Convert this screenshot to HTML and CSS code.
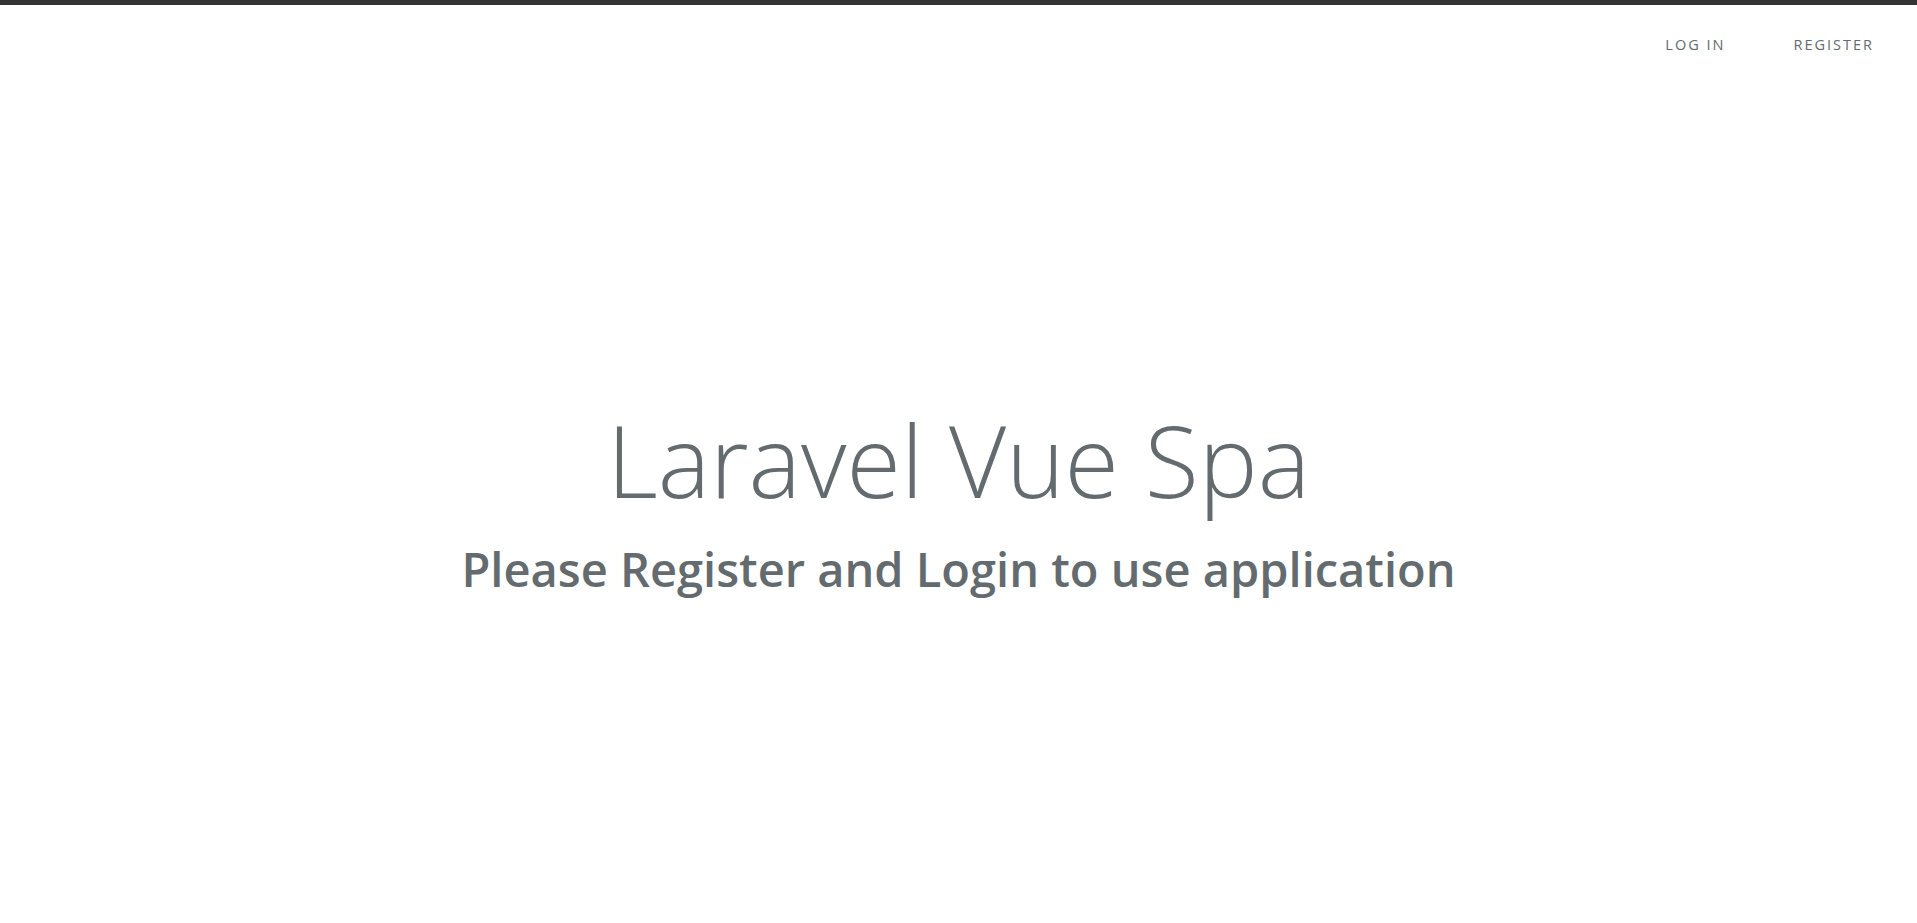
FILE: index.html
```html
<!DOCTYPE html>
<html lang="en">
<head>
<meta charset="utf-8">
<title>Laravel Vue Spa</title>
<link rel="stylesheet" href="styles.css">
</head>
<body>
<div class="page">
  <nav class="links">
    <a href="#">Log in</a>
    <a href="#">Register</a>
  </nav>
  <main class="content">
    <div class="title">Laravel Vue Spa</div>
    <h1 class="subtitle">Please Register and Login to use application</h1>
  </main>
</div>
</body>
</html>
```
FILE: styles.css
```css
html, body {
  margin: 0;
  padding: 0;
  background: #fff;
  color: #636b6f;
  font-family: "Open Sans", "Noto Sans", sans-serif;
}
.page {
  position: relative;
  height: 923px;
  box-sizing: border-box;
  border-top: 5px solid #343434;
  display: flex;
  align-items: center;
  justify-content: center;
}
.links {
  position: absolute;
  top: 30px;
  right: 9px;
  display: flex;
}
.links a {
  color: #636b6f;
  padding: 0 34px;
  font-size: 14.5px;
  font-weight: 500;
  letter-spacing: 2px;
  text-decoration: none;
  text-transform: uppercase;
}
.content {
  text-align: center;
  padding-top: 70px;
}
.title {
  font-size: 99px;
  font-weight: 300;
  line-height: 1.2;
  margin-bottom: 21px;
}
.subtitle {
  margin: 0;
  font-size: 47px;
  font-weight: 600;
  line-height: 1.2;
}
```
